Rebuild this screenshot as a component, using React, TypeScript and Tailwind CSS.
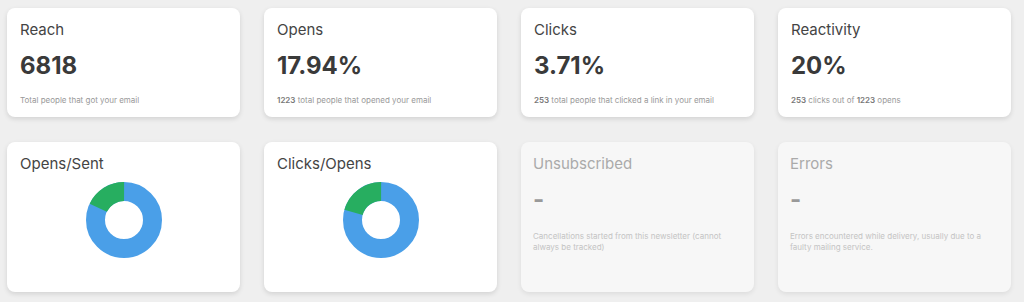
import React from "react"

type Stat = {
  title: string
  value: string
  desc: React.ReactNode
}

const stats: Stat[] = [
  { title: "Reach", value: "6818", desc: <>Total people that got your email</> },
  {
    title: "Opens",
    value: "17.94%",
    desc: (
      <>
        <b className="font-semibold text-[#777]">1223</b> total people that opened your email
      </>
    ),
  },
  {
    title: "Clicks",
    value: "3.71%",
    desc: (
      <>
        <b className="font-semibold text-[#777]">253</b> total people that clicked a link in your email
      </>
    ),
  },
  {
    title: "Reactivity",
    value: "20%",
    desc: (
      <>
        <b className="font-semibold text-[#777]">253</b> clicks out of <b className="font-semibold text-[#777]">1223</b> opens
      </>
    ),
  },
]

function Donut({ ratio }: { ratio: number }) {
  // blue runs clockwise from 12 o'clock, green closes the circle
  const r = 28.5
  const c = 2 * Math.PI * r
  const green = c * ratio
  return (
    <svg width="76" height="76" viewBox="0 0 76 76">
      <circle cx="38" cy="38" r={r} fill="none" stroke="#4a9fe8" strokeWidth="19" />
      <circle
        cx="38"
        cy="38"
        r={r}
        fill="none"
        stroke="#27ae60"
        strokeWidth="19"
        strokeDasharray={`${green} ${c}`}
        transform={`rotate(${-90 - ratio * 360} 38 38)`}
      />
    </svg>
  )
}

function StatCard({ stat }: { stat: Stat }) {
  return (
    <div className="w-[233px] h-[109px] bg-white rounded-lg shadow-[0_2px_5px_rgba(0,0,0,0.12)] px-[13px] pt-[12px]">
      <div className="text-[15px] leading-[20px] text-[#444]">{stat.title}</div>
      <div className="mt-[11px] text-[24px] leading-[30px] font-bold text-[#3a3a3a]">{stat.value}</div>
      <div className="mt-[14px] text-[8px] leading-[11px] text-[#999]">{stat.desc}</div>
    </div>
  )
}

function ChartCard({ title, ratio }: { title: string; ratio: number }) {
  return (
    <div className="w-[233px] h-[150px] bg-white rounded-lg shadow-[0_2px_5px_rgba(0,0,0,0.12)] px-[13px] pt-[12px]">
      <div className="text-[15px] leading-[20px] text-[#444]">{title}</div>
      <div className="flex justify-center mt-[8px]">
        <Donut ratio={ratio} />
      </div>
    </div>
  )
}

function EmptyCard({ title, desc }: { title: string; desc: string }) {
  return (
    <div className="w-[233px] h-[150px] bg-[#f7f7f7] rounded-lg shadow-[0_2px_5px_rgba(0,0,0,0.08)] px-[12px] pt-[12px]">
      <div className="text-[15px] leading-[20px] text-[#aaa]">{title}</div>
      <div className="mt-[11px] text-[24px] leading-[30px] font-bold text-[#999]">-</div>
      <div className="mt-[16px] text-[8px] leading-[11px] text-[#c4c4c4] pr-[10px]">{desc}</div>
    </div>
  )
}

export default function App() {
  return (
    <div className="w-[1024px] h-[302px] bg-[#efefef] pl-[7px] pt-[8px] font-['Inter',sans-serif]">
      <div className="flex gap-[24px]">
        {stats.map((s) => (
          <StatCard key={s.title} stat={s} />
        ))}
      </div>
      <div className="flex gap-[24px] mt-[25px]">
        <ChartCard title="Opens/Sent" ratio={0.1794} />
        <ChartCard title="Clicks/Opens" ratio={0.2069} />
        <EmptyCard title="Unsubscribed" desc="Cancellations started from this newsletter (cannot always be tracked)" />
        <EmptyCard title="Errors" desc="Errors encountered while delivery, usually due to a faulty mailing service." />
      </div>
    </div>
  )
}
